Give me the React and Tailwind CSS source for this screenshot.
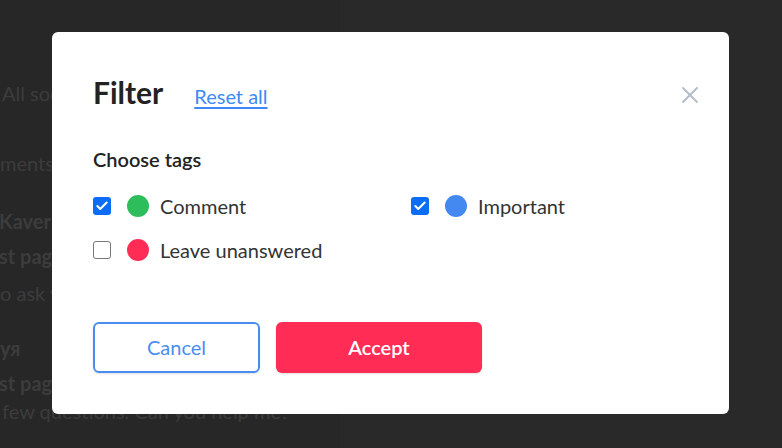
import { X, Check } from 'lucide-react';

const tags = [
  { id: 'comment', label: 'Comment', color: 'bg-[#2dbd5a]', checked: true },
  { id: 'important', label: 'Important', color: 'bg-[#4489f0]', checked: true },
  { id: 'leave', label: 'Leave unanswered', color: 'bg-[#ff2d55]', checked: false },
];

function Checkbox({ checked }) {
  if (checked) {
    return (
      <span className="w-[18px] h-[18px] rounded-[3px] bg-[#0b6cf5] flex items-center justify-center shrink-0">
        <Check size={14} strokeWidth={3.5} className="text-white" />
      </span>
    );
  }
  return <span className="w-[18px] h-[18px] rounded-[3px] border border-[#767676] bg-white shrink-0" />;
}

function Background() {
  // dimmed page behind the modal
  return (
    <div className="h-full bg-[#272727] text-[#3c3c3c] text-[20px] flex">
      <div className="w-[340px] pl-[2px]">
        <div className="mt-[80px] leading-[26px]">All social</div>
        <div className="mt-[44px] leading-[26px] -ml-[2px]">ments</div>
        <div className="mt-[32px] leading-[26px] font-bold -ml-[3px]">Kaverun</div>
        <div className="mt-[9px] leading-[26px] font-bold -ml-[3px]">st page</div>
        <div className="mt-[11px] leading-[26px] -ml-[2px]">o ask you</div>
        <div className="mt-[29px] leading-[26px] font-bold -ml-[2px]">уя</div>
        <div className="mt-[9px] leading-[26px] font-bold -ml-[3px]">st page</div>
        <div className="mt-[2px] leading-[26px] whitespace-nowrap">few questions. Can you help me?</div>
      </div>
      <div className="flex-1 bg-[#292929]" />
    </div>
  );
}

export default function App() {
  return (
    <div className="relative w-[782px] h-[448px] overflow-hidden font-['Lato','Liberation_Sans',sans-serif]">
      <Background />
      <div className="absolute left-[52px] top-[32px] w-[677px] h-[382px] bg-white rounded-[6px] px-[41px] pt-[43px]">
        <div className="flex items-baseline h-[34px]">
          <h2 className="text-[30px] leading-[34px] font-bold text-[#222]">Filter</h2>
          <a href="#" className="ml-[31px] text-[20px] text-[#3d8af7] underline underline-offset-[3px]">
            Reset all
          </a>
        </div>
        <button className="absolute right-[25px] top-[49px] text-[#b5bfca]">
          <X size={28} strokeWidth={1.75} />
        </button>

        <div className="mt-[37px] text-[20px] leading-[26px] font-semibold text-[#222]">Choose tags</div>

        <div className="mt-[21px] grid grid-cols-[318px_1fr] gap-y-[18px]">
          {tags.map((t) => (
            <label key={t.id} className="flex items-center h-[26px]">
              <Checkbox checked={t.checked} />
              <span className={`ml-[16px] w-[22px] h-[22px] rounded-full ${t.color} shrink-0`} />
              <span className="ml-[11px] text-[20px] text-[#333]">{t.label}</span>
            </label>
          ))}
        </div>

        <div className="mt-[59px] flex gap-[16px]">
          <button className="w-[167px] h-[51px] pb-[2px] rounded-[6px] border-2 border-[#4a8df0] text-[#4a8df0] text-[20px] shadow-sm">
            Cancel
          </button>
          <button className="w-[206px] h-[51px] pb-[2px] rounded-[6px] bg-[#ff2d55] text-white text-[20px] font-semibold shadow-sm">
            Accept
          </button>
        </div>
      </div>
    </div>
  );
}
